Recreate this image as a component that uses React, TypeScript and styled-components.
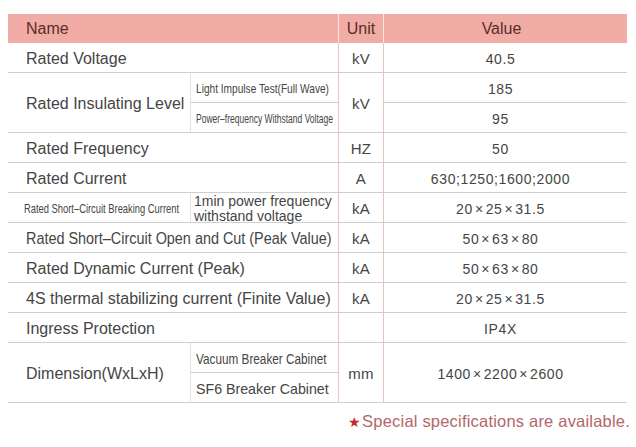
import React from 'react';
import styled, { createGlobalStyle } from 'styled-components';

const GlobalStyle = createGlobalStyle`
  body {
    margin: 0;
    background: #ffffff;
    font-family: 'Liberation Sans', Arial, sans-serif;
  }
`;

const Page = styled.div`
  width: 636px;
  padding: 14px 0 0 8px;
  box-sizing: border-box;
`;

const Table = styled.div`
  display: grid;
  grid-template-columns: 182px 148px 45px 244px;
  grid-template-rows: 29px;
  grid-auto-rows: 30px;
  width: 619px;
  color: #454545;
`;

const Head = styled.div<{ $align?: string; $span?: number; $sep?: boolean; $shift?: number }>`
  grid-column: span ${(p) => p.$span ?? 1};
  background: #f1aca6;
  color: #5a2c2c;
  font-size: 16px;
  display: flex;
  align-items: center;
  justify-content: ${(p) => p.$align ?? 'center'};
  padding-top: 1px;
  padding-left: ${(p) => (p.$align === 'flex-start' ? '18px' : '0')};
  padding-right: ${(p) => p.$shift ?? 0}px;
  border-left: ${(p) => (p.$sep ? '1px solid #fbe4e2' : 'none')};
`;

const Cell = styled.div<{
  $col?: string;
  $rows?: number;
  $kind?: 'name' | 'sub' | 'unit' | 'value';
}>`
  grid-column: ${(p) => p.$col ?? 'auto'};
  grid-row: span ${(p) => p.$rows ?? 1};
  display: flex;
  align-items: center;
  box-sizing: border-box;
  padding-top: 2px;
  border-bottom: 1px solid #cfcfcf;
  white-space: nowrap;
  overflow: visible;
  ${(p) =>
    p.$kind === 'name' &&
    `
    padding-left: 18px;
    font-size: 16px;
  `}
  ${(p) =>
    p.$kind === 'sub' &&
    `
    padding-left: 5px;
    border-left: 1px solid #e2e2e2;
    font-size: 14px;
  `}
  ${(p) =>
    p.$kind === 'unit' &&
    `
    justify-content: center;
    border-left: 1px solid #e8c3c3;
    font-size: 15px;
    letter-spacing: 0.3px;
  `}
  ${(p) =>
    p.$kind === 'value' &&
    `
    justify-content: center;
    padding-right: 10px;
    border-left: 1px solid #e8c3c3;
    font-size: 14px;
    letter-spacing: 0.6px;
  `}
`;

const Narrow = styled.span<{ $scale: number; $size?: number }>`
  display: inline-block;
  font-size: ${(p) => p.$size ?? 12}px;
  transform: scaleX(${(p) => p.$scale});
  transform-origin: left center;
  white-space: nowrap;
`;

const TwoLine = styled.div`
  font-size: 14px;
  line-height: 15px;
  white-space: normal;
`;

const Times = styled.span`
  margin: 0 2px;
`;

const Note = styled.div`
  width: 622px;
  text-align: right;
  margin-top: 9px;
  font-size: 16.5px;
  color: #b1676a;
  letter-spacing: 0.2px;
`;

const Star = styled.span`
  color: #c42a2a;
  font-size: 14px;
  margin-right: 1px;
`;

type Row = { name: string; unit: string; value: string; narrow?: number };

const simpleRows: Row[] = [
  { name: 'Rated Frequency', unit: 'HZ', value: '50' },
  { name: 'Rated Current', unit: 'A', value: '630;1250;1600;2000' },
];

const lowerRows: Row[] = [
  { name: 'Rated Short\u2013Circuit Open and Cut (Peak Value)', unit: 'kA', value: '50\u00d763\u00d780', narrow: 0.9 },
  { name: 'Rated Dynamic Current (Peak)', unit: 'kA', value: '50\u00d763\u00d780' },
  { name: '4S thermal stabilizing current (Finite Value)', unit: 'kA', value: '20\u00d725\u00d731.5' },
  { name: 'Ingress Protection', unit: '', value: 'IP4X' },
];

const Value = ({ text }: { text: string }) => {
  const parts = text.split('\u00d7');
  return (
    <>
      {parts.map((part, i) => (
        <React.Fragment key={i}>
          {i > 0 && <Times>&times;</Times>}
          {part}
        </React.Fragment>
      ))}
    </>
  );
};

const renderRow = (r: Row) => (
  <React.Fragment key={r.name}>
    <Cell $kind="name" $col="span 2">
      {r.narrow ? (
        <Narrow $scale={r.narrow} $size={16}>
          {r.name}
        </Narrow>
      ) : (
        r.name
      )}
    </Cell>
    <Cell $kind="unit">{r.unit}</Cell>
    <Cell $kind="value">
      <Value text={r.value} />
    </Cell>
  </React.Fragment>
);

const App = () => (
  <Page>
    <GlobalStyle />
    <Table>
      <Head $span={2} $align="flex-start">
        Name
      </Head>
      <Head $sep>Unit</Head>
      <Head $sep $shift={8}>
        Value
      </Head>

      {renderRow({ name: 'Rated Voltage', unit: 'kV', value: '40.5' })}

      <Cell $kind="name" $rows={2}>
        Rated Insulating Level
      </Cell>
      <Cell $kind="sub">
        <Narrow $scale={0.78} $size={13}>
          Light Impulse Test(Full Wave)
        </Narrow>
      </Cell>
      <Cell $kind="unit" $rows={2}>
        kV
      </Cell>
      <Cell $kind="value">185</Cell>
      <Cell $kind="sub">
        <Narrow $scale={0.68} $size={12.5}>
          Power&#8211;frequency Withstand Voltage
        </Narrow>
      </Cell>
      <Cell $kind="value">95</Cell>

      {simpleRows.map(renderRow)}

      <Cell $kind="name" style={{ paddingLeft: 16 }}>
        <Narrow $scale={0.72} $size={13}>
          Rated Short&#8211;Circuit Breaking Current
        </Narrow>
      </Cell>
      <Cell $kind="sub" style={{ paddingLeft: 3 }}>
        <TwoLine>
          1min power frequency
          <br />
          withstand voltage
        </TwoLine>
      </Cell>
      <Cell $kind="unit">kA</Cell>
      <Cell $kind="value">
        <Value text={'20\u00d725\u00d731.5'} />
      </Cell>

      {lowerRows.map(renderRow)}

      <Cell $kind="name" $rows={2}>
        Dimension(WxLxH)
      </Cell>
      <Cell $kind="sub">
        <Narrow $scale={0.84} $size={14}>
          Vacuum Breaker Cabinet
        </Narrow>
      </Cell>
      <Cell $kind="unit" $rows={2}>
        mm
      </Cell>
      <Cell $kind="value" $rows={2}>
        <Value text={'1400\u00d72200\u00d72600'} />
      </Cell>
      <Cell $kind="sub">
        <Narrow $scale={0.98} $size={14.5}>
          SF6 Breaker Cabinet
        </Narrow>
      </Cell>
    </Table>
    <Note>
      <Star>&#9733;</Star>Special specifications are available.
    </Note>
  </Page>
);

export default App;
